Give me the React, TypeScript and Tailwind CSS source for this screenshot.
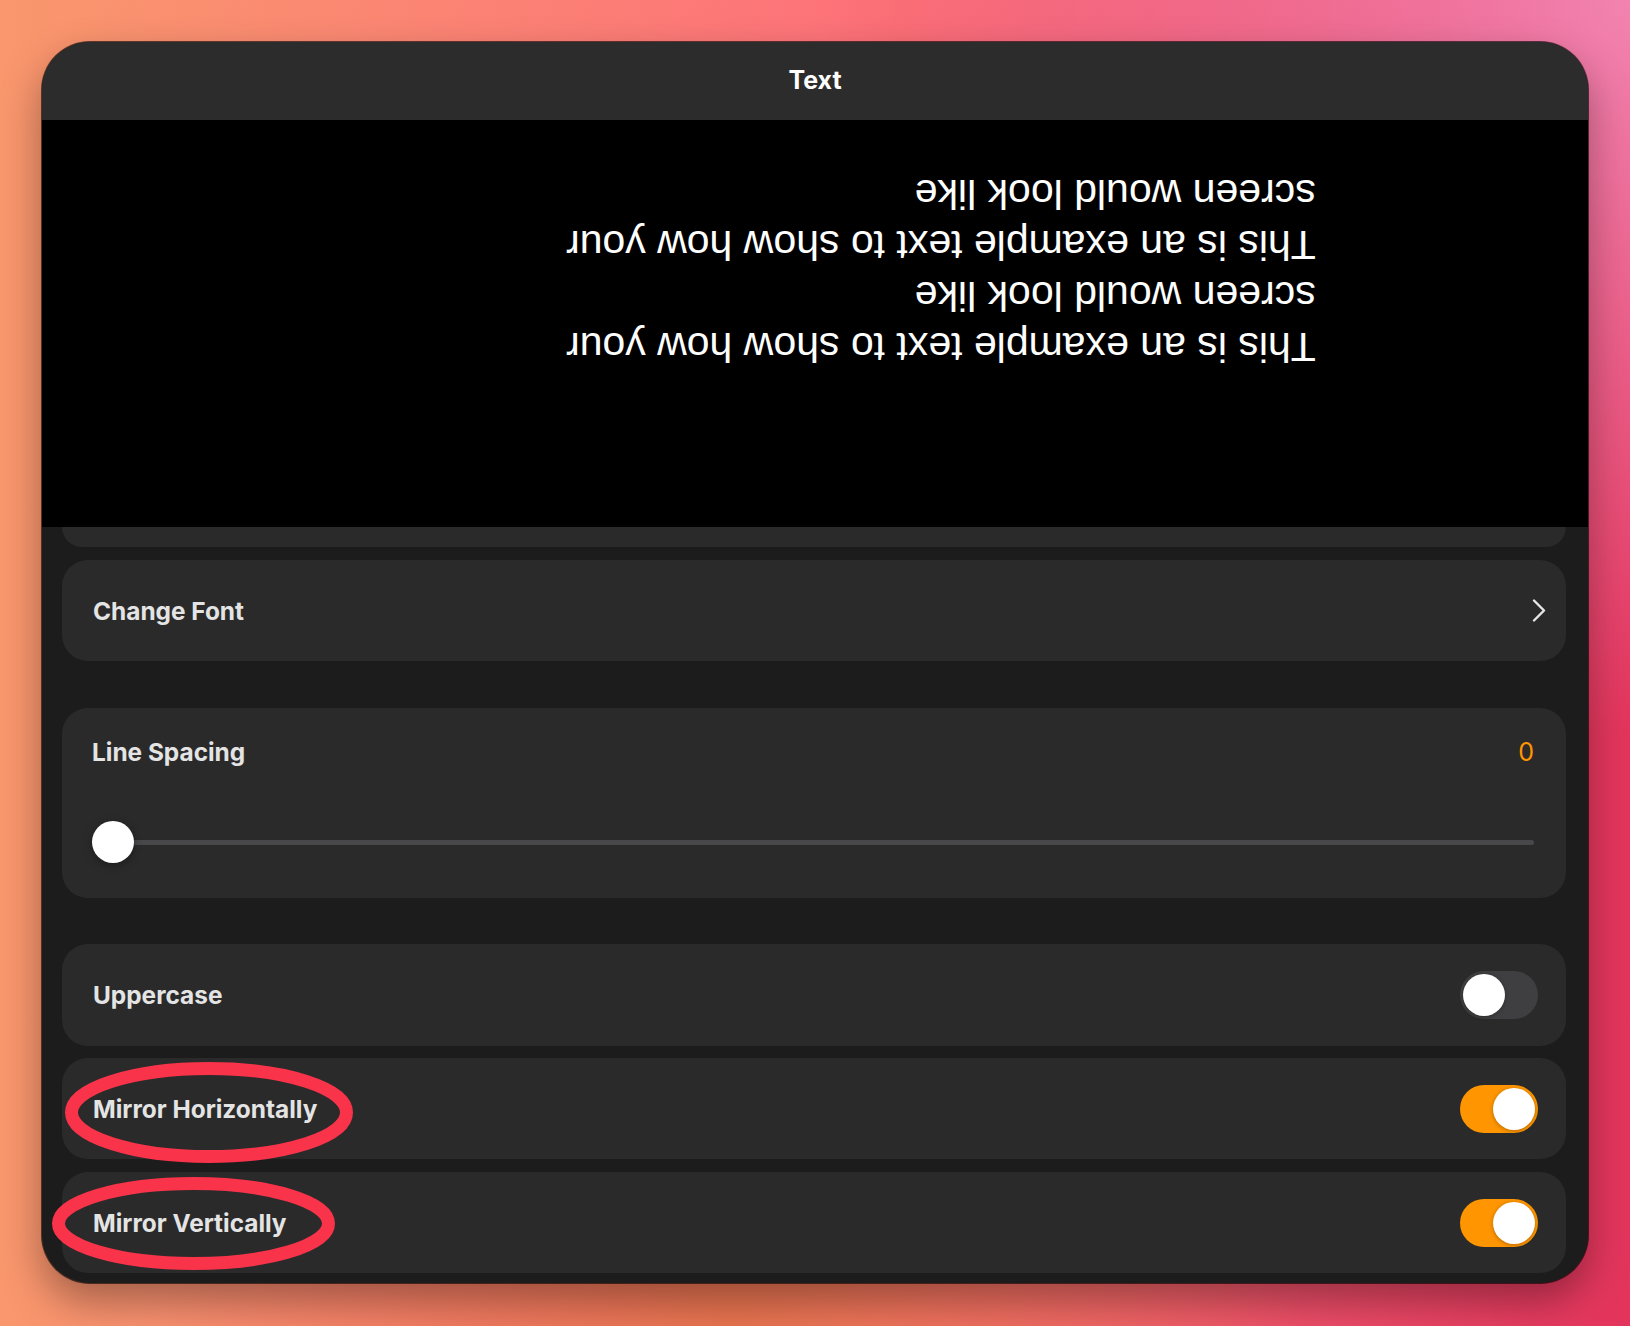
export default function App() {
  const label = "font-['Inter','Liberation_Sans',sans-serif] text-[24.4px] font-bold leading-[30px] text-[#e4e4e4]";

  return (
    <main className="min-h-screen w-full bg-[radial-gradient(circle_at_100%_0%,#f283b0_0%,transparent_35%),radial-gradient(ellipse_at_45%_100%,#e9744f_0%,transparent_45%),linear-gradient(90deg,#f9976d_0%,#fd7479_50%,#e3345c_100%)] px-[42px] pt-[42px] pb-[43px]">
      <div className="relative flex h-[1241px] w-full flex-col overflow-hidden rounded-[48px] bg-[#1c1c1c] shadow-[0_18px_40px_rgba(0,0,0,0.35)] ring-1 ring-black/60">
        {/* header */}
        <div className="flex h-[78px] items-center justify-center bg-[#2c2c2c]">
          <span className="font-['Inter','Liberation_Sans',sans-serif] text-[25px] font-bold text-white">Text</span>
        </div>

        {/* preview, mirrored both ways */}
        <div className="flex h-[407px] items-start justify-end bg-black pt-[48px] pr-[272px]">
          <div className="rotate-180 whitespace-nowrap text-left font-['Liberation_Sans',Arial,sans-serif] text-[41px] leading-[51px] text-white">
            This is an example text to show how your
            <br />
            screen would look like
            <br />
            This is an example text to show how your
            <br />
            screen would look like
          </div>
        </div>

        <div className="flex flex-col pl-[20px] pr-[22px]">
          <div className="h-[20px] rounded-b-[26px] bg-[#2a2a2a]" />

          <div className="mt-[13px] flex h-[101px] items-center justify-between rounded-[26px] bg-[#2a2a2a] pl-[31px] pr-[20px]">
            <span className={label}>Change Font</span>
            <svg width="14" height="23" viewBox="0 0 14 23" fill="none">
              <polyline points="2,1.5 12,11.5 2,21.5" stroke="#e6e6e6" strokeWidth="2.4" strokeLinecap="round" strokeLinejoin="round" />
            </svg>
          </div>

          <div className="mt-[47px] flex h-[190px] flex-col rounded-[26px] bg-[#2a2a2a] pt-[29px] pl-[30px] pr-[32px]">
            <div className="flex items-center justify-between">
              <span className={label}>Line Spacing</span>
              <span className="font-['Inter','Liberation_Sans',sans-serif] text-[25px] leading-[30px] text-[#ff9500]">0</span>
            </div>
            <div className="relative mt-[54px] flex h-[42px] items-center">
              <div className="h-[5px] w-full rounded-full bg-[#48484a]" />
              <div className="absolute left-0 top-0 h-[42px] w-[42px] rounded-full bg-white shadow-[0_2px_8px_rgba(0,0,0,0.35)]" />
            </div>
          </div>

          <div className="mt-[46px] flex h-[102px] items-center justify-between rounded-[26px] bg-[#2a2a2a] pl-[31px] pr-[28px]">
            <span className={label}>Uppercase</span>
            <Toggle on={false} />
          </div>

          <div className="mt-[12px] flex h-[101px] items-center justify-between rounded-[26px] bg-[#2a2a2a] pl-[31px] pr-[28px]">
            <span className={label}>Mirror Horizontally</span>
            <Toggle on />
          </div>

          <div className="mt-[13px] flex h-[101px] items-center justify-between rounded-[26px] bg-[#2a2a2a] pl-[31px] pr-[28px]">
            <span className={label}>Mirror Vertically</span>
            <Toggle on />
          </div>
        </div>

        {/* annotation rings */}
        <svg className="pointer-events-none absolute left-0 top-0" width="1546" height="1241" viewBox="0 0 1546 1241" fill="none">
          <ellipse cx="167" cy="1070.5" rx="137.5" ry="44" stroke="#f8334a" strokeWidth="13" />
          <ellipse cx="151.5" cy="1181.5" rx="135" ry="40" stroke="#f8334a" strokeWidth="13" />
        </svg>
      </div>
    </main>
  );
}

function Toggle({ on }: { on: boolean }) {
  return (
    <div
      className={
        on
          ? "flex h-[48px] w-[78px] items-center justify-end rounded-full bg-[#ff9500] p-[3px]"
          : "flex h-[48px] w-[78px] items-center justify-start rounded-full bg-[#3f3f41] p-[3px]"
      }
    >
      <div className="h-[42px] w-[42px] rounded-full bg-white shadow-[0_1px_4px_rgba(0,0,0,0.3)]" />
    </div>
  );
}
